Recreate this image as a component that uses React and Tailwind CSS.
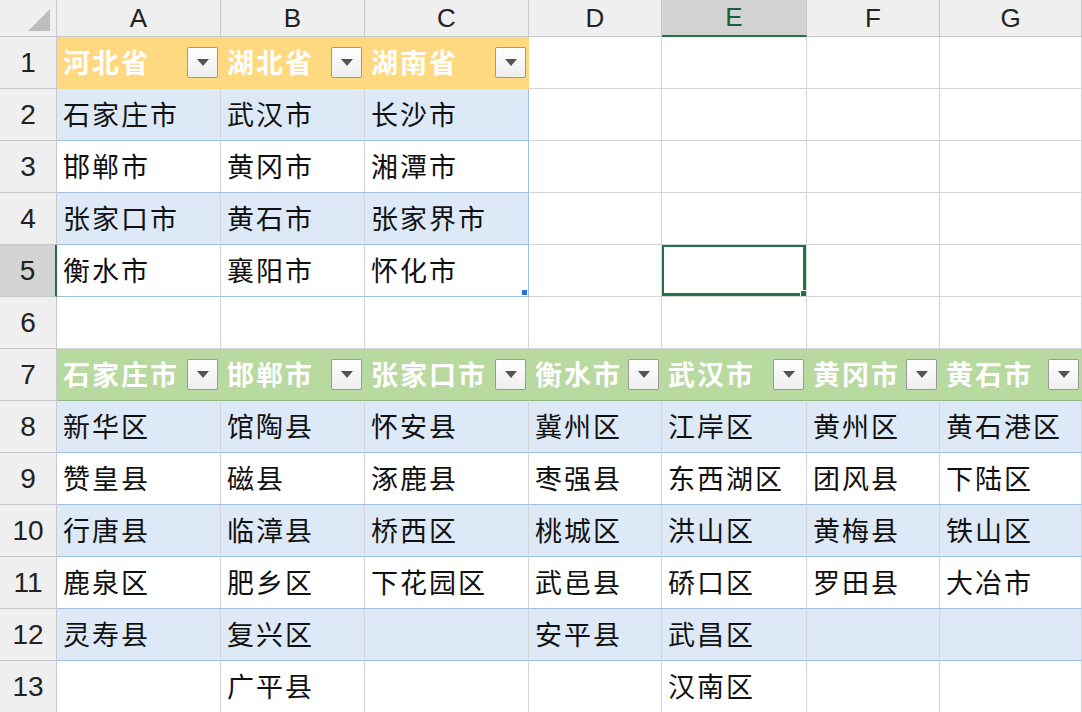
import React from "react";

const cols = ["A","B","C","D","E","F","G"];
const t1h = ["河北省","湖北省","湖南省"];
const t1 = [["石家庄市","武汉市","长沙市"],["邯郸市","黄冈市","湘潭市"],["张家口市","黄石市","张家界市"],["衡水市","襄阳市","怀化市"]];
const t2h = ["石家庄市","邯郸市","张家口市","衡水市","武汉市","黄冈市","黄石市"];
const t2 = [
  ["新华区","馆陶县","怀安县","冀州区","江岸区","黄州区","黄石港区"],
  ["赞皇县","磁县","涿鹿县","枣强县","东西湖区","团风县","下陆区"],
  ["行唐县","临漳县","桥西区","桃城区","洪山区","黄梅县","铁山区"],
  ["鹿泉区","肥乡区","下花园区","武邑县","硚口区","罗田县","大冶市"],
  ["灵寿县","复兴区","","安平县","武昌区","",""],
  ["","广平县","","","汉南区","",""],
];

function Drop() {
  return (
    <div className="ml-auto mr-[2px] shrink-0 w-[31px] h-[31px] bg-gradient-to-b from-white to-[#eeeeee] border border-[#9a9a9a] rounded-[2px] flex items-center justify-center">
      <svg width="12" height="7" viewBox="0 0 12 7"><path d="M0 0H12L6 7Z" fill="#555"/></svg>
    </div>
  );
}

export default function App() {
  const font = { fontFamily: '"Noto Sans CJK SC","Liberation Sans",sans-serif' };
  const cells = [];
  cells.push(
    <div key="corner" className="bg-[#efefef] border-r border-b border-[#c8c8c8] flex items-end justify-end pr-[6px] pb-[5px]">
      <svg width="22" height="22"><path d="M22 0V22H0Z" fill="#bdbdbd"/></svg>
    </div>
  );
  cols.forEach((c) => {
    const sel = c === "E";
    cells.push(
      <div key={c} className={`flex items-center justify-center text-[26px] border-r border-[#c8c8c8] ${sel ? "bg-[#d3d3d3] border-b-2 border-b-[#217346] text-[#1e5d3a]" : "bg-[#efefef] border-b border-b-[#c8c8c8] text-[#222]"}`} style={{ fontFamily: '"Liberation Sans",sans-serif' }}>{c}</div>
    );
  });
  for (let r = 1; r <= 13; r++) {
    const selRow = r === 5;
    cells.push(
      <div key={"rh" + r} className={`flex items-center justify-center text-[28px] text-[#222] border-b border-[#c8c8c8] ${selRow ? "bg-[#d3d3d3] border-r-2 border-r-[#217346]" : "bg-[#efefef] border-r border-r-[#c8c8c8]"}`} style={{ fontFamily: '"Liberation Sans",sans-serif' }}>{r}</div>
    );
    cols.forEach((c, ci) => {
      let cls = "relative flex items-center pl-[6px] text-[27px] tracking-[2px] border-r border-b border-[#d4d4d4] text-[#111] whitespace-nowrap overflow-hidden";
      let content = null;
      let extra = null;
      if (r === 1 && ci < 3) {
        cls += " bg-[#ffd97f] font-bold text-white border-r-[#ffd97f] border-b-[#ffd97f]";
        content = t1h[ci];
        extra = <Drop />;
      } else if (r >= 2 && r <= 5 && ci < 3) {
        cls += (r % 2 === 0 ? " bg-[#dde9f6]" : " bg-white") + " border-b-[#9fbfe0]";
        if (ci === 2) cls += " border-r-[#9fbfe0]";
        content = t1[r - 2][ci];
        if (r === 5 && ci === 2) extra = <div className="absolute right-[1px] bottom-[1px] w-[5px] h-[5px] bg-[#2e6fd8]" />;
      } else if (r === 7) {
        cls += " bg-[#b8d9a0] font-bold text-white border-r-[#b8d9a0] border-b-[#8fb98a]";
        content = t2h[ci];
        extra = <Drop />;
      } else if (r >= 8) {
        cls += (r % 2 === 0 ? " bg-[#dde9f6]" : " bg-white") + " border-b-[#9fbfe0]";
        content = t2[r - 8][ci];
      }
      if (r === 5 && c === "E") {
        extra = (
          <div className="absolute -left-px -top-px right-0 bottom-0 border-[3px] border-[#217346]">
            <div className="absolute -right-[6px] -bottom-[6px] w-[9px] h-[9px] bg-[#217346] border border-white" />
          </div>
        );
      }
      cells.push(<div key={c + r} className={cls}>{content}{extra}</div>);
    });
  }
  return (
    <div className="w-[1082px] h-[712px] overflow-hidden bg-white" style={font}>
      <div className="grid grid-cols-[57px_164px_144px_164px_133px_145px_133px_142px] grid-rows-[37px_repeat(13,52px)]">
        {cells}
      </div>
    </div>
  );
}
